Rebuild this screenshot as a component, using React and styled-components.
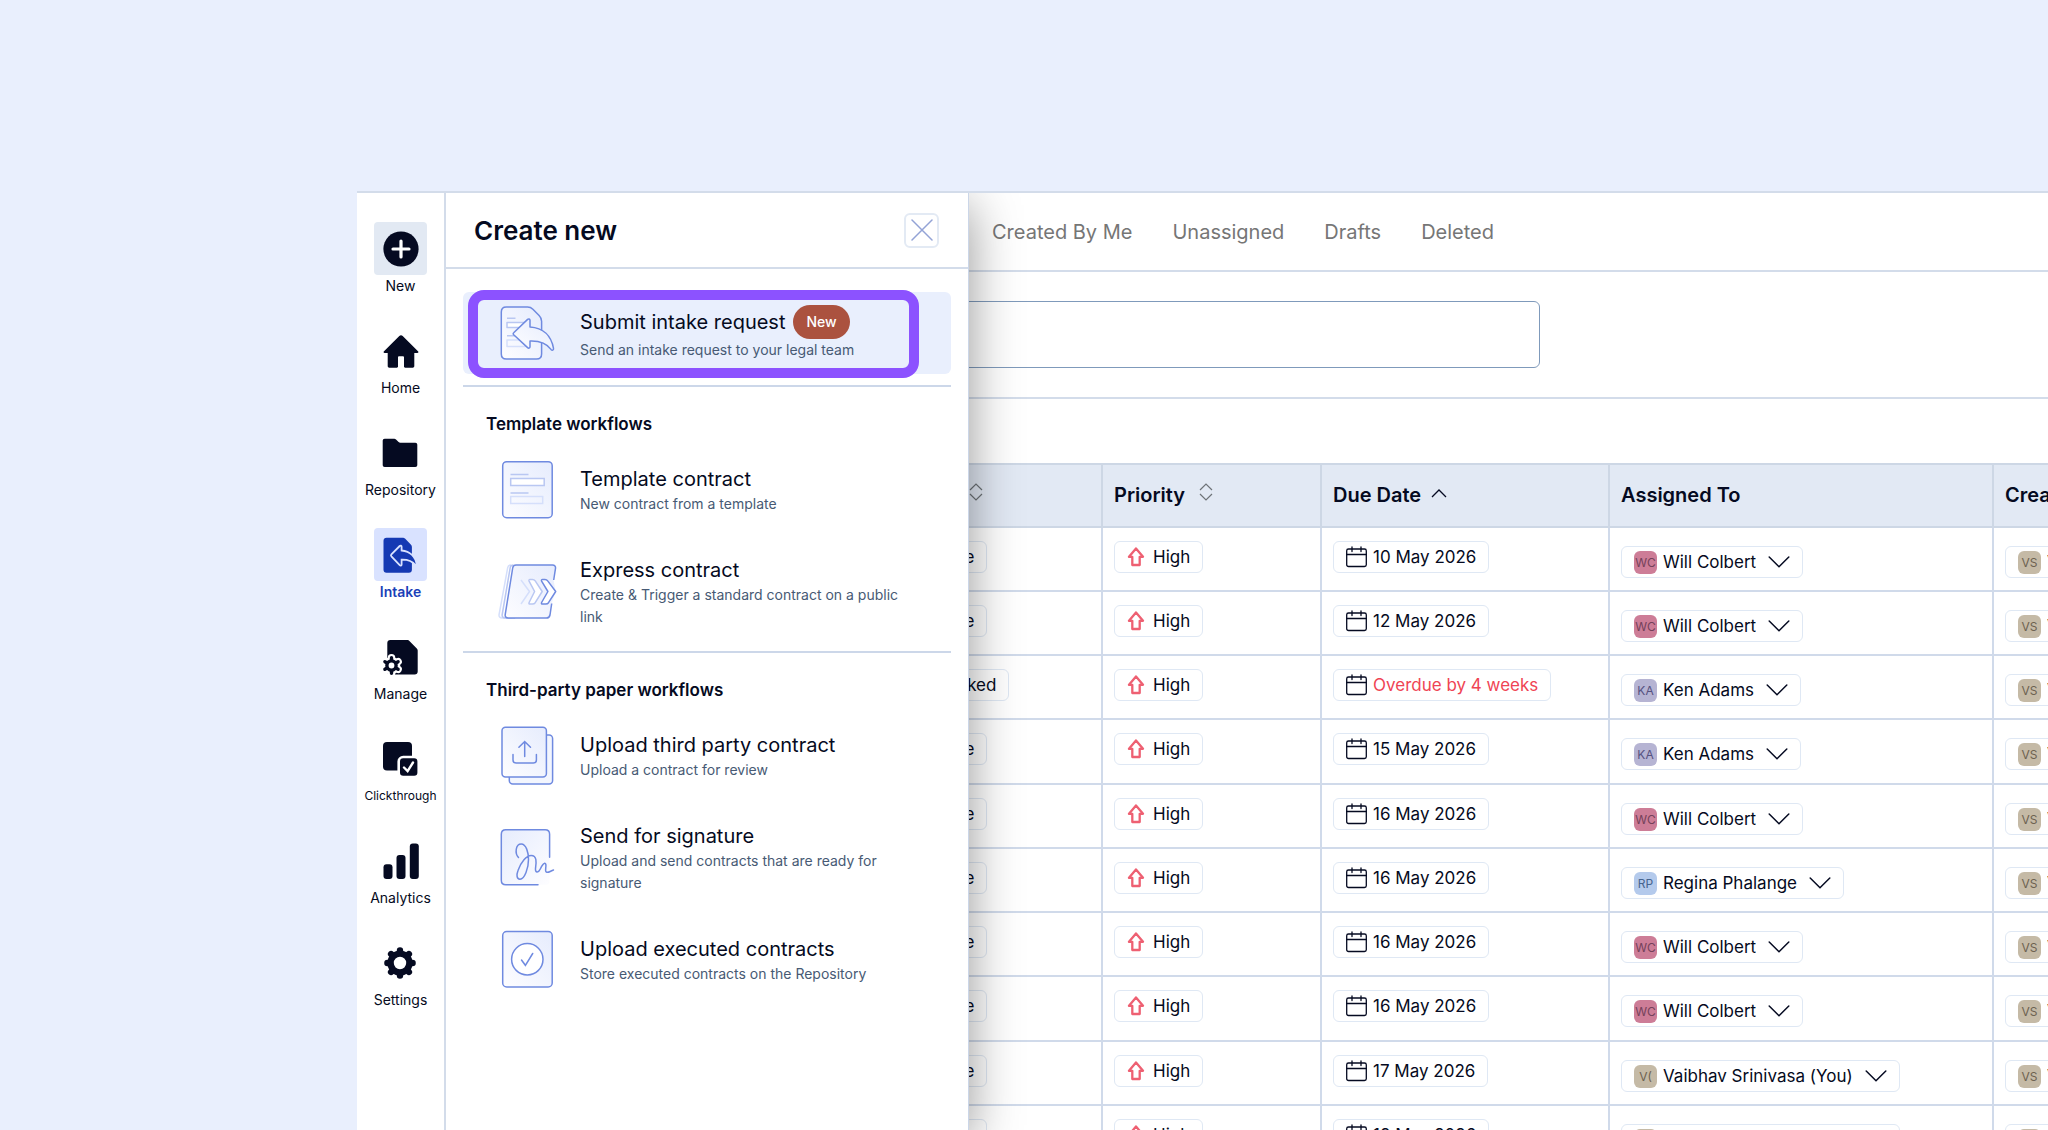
import React from "react";
import styled, { createGlobalStyle } from "styled-components";

const GlobalStyle = createGlobalStyle`
  *, *::before, *::after {
    box-sizing: border-box;
  }

  body {
    margin: 0;
    background: #e9effd;
    color: #050a21;
    font-family: Inter, "Liberation Sans", sans-serif;
    font-size: 18px;
  }

  button, input, select {
    font: inherit;
    color: inherit;
  }
`;

const Page = styled.div`
  display: flex;
  height: 100vh;
  padding: 191px 0 0 357px;
  overflow: hidden;
`;

const Shell = styled.div`
  display: flex;
  flex: 1;
  min-width: 0;
  border-top: 2px solid #d3dcea;
  background: #fff;
`;

/* Left rail */

const Rail = styled.nav`
  display: flex;
  flex: none;
  flex-direction: column;
  align-items: center;
  gap: 27px;
  width: 89px;
  padding-top: 29px;
  border-right: 2px solid #d3dcea;
`;

const RailLink = styled.a`
  display: flex;
  flex-direction: column;
  align-items: center;
  color: ${(props) => (props.$active ? "#1a3fb8" : "#050a21")};
  font-size: ${(props) => (props.$small ? "12px" : "14px")};
  font-weight: ${(props) => (props.$active ? 600 : 400)};
  line-height: 22px;
  text-decoration: none;
`;

const RailTile = styled.span`
  display: flex;
  align-items: center;
  justify-content: center;
  width: 53px;
  height: 53px;
  border-radius: 4px;
  background: ${(props) => props.$tile || "transparent"};
`;

/* Drawer */

const Workspace = styled.div`
  position: relative;
  flex: 1;
  min-width: 0;
  overflow: hidden;
`;

const Drawer = styled.aside`
  position: absolute;
  top: 0;
  bottom: 0;
  left: 0;
  z-index: 1;
  width: 523px;
  border-right: 1px solid #cbd6e8;
  background: #fff;
  box-shadow: 0 12px 48px rgba(0, 0, 0, 0.42);
`;

const DrawerHeader = styled.header`
  display: flex;
  align-items: center;
  justify-content: space-between;
  height: 76px;
  padding: 0 29px 0 28px;
  border-bottom: 2px solid #d3dcea;
`;

const DrawerTitle = styled.h1`
  margin: 0;
  font-size: 26px;
  font-weight: 600;
`;

const CloseButton = styled.button`
  display: flex;
  align-items: center;
  justify-content: center;
  width: 35px;
  height: 35px;
  padding: 0;
  border: 2px solid #e3eaf4;
  border-radius: 6px;
  background: #fff;
`;

const DrawerBody = styled.div`
  padding: 23px 17px 0;
`;

const Workflow = styled.button`
  position: relative;
  display: flex;
  align-items: center;
  gap: 22px;
  width: 100%;
  padding: ${(props) => (props.$highlighted ? "13px 35px" : "21px 35px 20px")};
  border: 0;
  border-radius: 6px;
  background: ${(props) => (props.$highlighted ? "#e9effd" : "transparent")};
  text-align: left;

  svg {
    flex: none;
    margin: -10px 0;
  }
`;

const Spotlight = styled.span`
  position: absolute;
  top: -2px;
  bottom: -4px;
  left: 5px;
  right: 32px;
  border: 10px solid #8c52ff;
  border-radius: 16px;
`;

const WorkflowText = styled.span`
  display: flex;
  flex-direction: column;
`;

const WorkflowTitle = styled.span`
  display: flex;
  align-items: center;
  gap: 8px;
  font-size: 20px;
  line-height: 28px;
`;

const WorkflowNote = styled.span`
  color: #475a74;
  font-size: 14px;
  line-height: 22px;
`;

const Badge = styled.span`
  padding: 0 13px;
  border-radius: 17px;
  background: #ab523f;
  color: #fff;
  font-size: 14px;
  font-weight: 500;
  line-height: 34px;
`;

const Section = styled.section`
  margin-top: ${(props) => props.$gap};
  padding-top: 25px;
  border-top: 2px solid #ccd7e9;
`;

const SectionTitle = styled.h2`
  margin: 0 0 8px;
  padding-left: 23px;
  font-size: 17px;
  font-weight: 600;
  line-height: 24px;
`;

/* Request list */

const Tabs = styled.nav`
  display: flex;
  align-items: center;
  gap: 40px;
  height: 79px;
  padding-left: 546px;
  border-bottom: 2px solid #d3dcea;
`;

const Tab = styled.a`
  color: #767676;
  font-size: 20px;
  text-decoration: none;
  white-space: nowrap;
`;

const SearchBar = styled.div`
  display: flex;
  padding: 29px 32px;
  border-bottom: 2px solid #d3dcea;
`;

const SearchInput = styled.input`
  flex: 0 1 1062px;
  height: 67px;
  border: 1px solid #7f9abb;
  border-radius: 6px;
  background: #fff;
`;

const TableArea = styled.div`
  padding: 64px 0 0 462px;
`;

const Table = styled.table`
  width: 1408px;
  table-layout: fixed;
  border-collapse: separate;
  border-spacing: 0;
`;

const HeadCell = styled.th`
  width: ${(props) => props.$width};
  height: 65px;
  padding: 0 11px 2px;
  border: solid #cdd7e5;
  border-width: 2px 2px 2px 0;
  background: #e2e9f4;
  font-size: 20px;
  font-weight: 600;
  text-align: left;
`;

const SortButton = styled.button`
  display: flex;
  align-items: center;
  gap: ${(props) => props.$gap || "14px"};
  padding: 0;
  border: 0;
  background: none;
  font-weight: 600;
`;

const Row = styled.tr`
  height: 64px;

  &:nth-child(4n) {
    height: 65px;
  }
`;

const Cell = styled.td`
  padding: ${(props) => (props.$person ? "18px" : "13px")} 11px 0;
  border: solid #d0daea;
  border-width: 0 2px 2px 0;
  vertical-align: top;
`;

const Chip = styled.button`
  display: flex;
  align-items: center;
  gap: ${(props) => props.$gap || "6px"};
  width: fit-content;
  height: 32px;
  padding: 0 12px;
  border: 1px solid #dfe8f4;
  border-radius: 6px;
  background: #fff;
  color: ${(props) => (props.$late ? "#ef4454" : "inherit")};
  font-size: 17px;
  white-space: nowrap;
`;

const Avatar = styled.span`
  flex: none;
  width: 23px;
  border-radius: 6px;
  background: ${(props) => props.$back};
  color: ${(props) => props.$ink};
  font-size: 12px;
  line-height: 23px;
  text-align: center;
`;

const PersonSelect = styled.select`
  appearance: none;
  field-sizing: content;
  margin-right: 6px;
  padding: 0;
  border: 0;
  background: none;
`;

const ink = "#050a21";
const line = "#6f8ae0";
const pale = "#b9c7f2";
const faint = "#d5dffb";

const NewIcon = () => (
  <svg width="36" height="36" viewBox="0 0 36 36">
    <circle cx="18" cy="18" r="17.6" fill={ink} />
    <path d="M18 10v16M10 18h16" stroke="#fff" strokeWidth="3.2" strokeLinecap="round" />
  </svg>
);

const HomeIcon = () => (
  <svg width="36" height="36" viewBox="0 0 36 36" fill={ink}>
    <path d="M18 2.2c.7 0 1.1.2 1.7.8L35 18.2c.8.8.4 1.7-.7 1.7h-3v13.2c0 .9-.7 1.6-1.6 1.6h-7.5c-.7 0-1.2-.5-1.2-1.2v-9c0-.7-.5-1.2-1.2-1.2h-3.6c-.7 0-1.2.5-1.2 1.2v9c0 .7-.5 1.2-1.2 1.2H6.3c-.9 0-1.6-.7-1.6-1.6V19.9h-3c-1.1 0-1.5-.9-.7-1.7L16.3 3c.6-.6 1-.8 1.7-.8z" />
  </svg>
);

const FolderIcon = () => (
  <svg width="36" height="36" viewBox="0 0 36 36" fill={ink}>
    <path d="M2.7 3.7h9.6c.7 0 1.2.2 1.7.7l2.6 2.6c.5.5 1 .7 1.7.7h15c1.2 0 2 .8 2 2v20.3c0 1.2-.8 2-2 2H2.7c-1.2 0-2-.8-2-2V5.700c0-1.200.8-2 2-2z" />
  </svg>
);

const IntakeIcon = () => (
  <svg width="36" height="36" viewBox="0 0 36 36" fill="#1539b3">
    <path d="M3.500.7h16.200c1 0 1.600.2 2.300.9l6 6.200c.6.7.9 1.300.9 2.200v22.800c0 1.800-1.200 3-3 3H3.500c-1.800 0-3-1.200-3-3V3.700c0-1.800 1.200-3 3-3z" />
    <path
      d="M8.4 17.3l8.3-8.300c.8-.8 1.900-.4 1.900.7v3.800c8.500.9 14 6.400 15.200 14.300.1.900-.6 1.200-1.200.5-3.500-4.300-7.700-5.800-14-5.600v4.800c0 1.100-1.100 1.500-1.900.7l-8.300-8.900c-.6-.7-.6-1.400 0-2z"
      stroke="#d9e2ff"
      strokeWidth="1.8"
    />
  </svg>
);

const ManageIcon = () => (
  <svg width="36" height="36" viewBox="0 0 36 36" overflow="visible">
    <path
      d="M8.300 1h17c.9 0 1.500.2 2.100.9l7.400 7.700c.6.6.9 1.200.9 2v21c0 1.800-1.200 3-3 3H8.300c-1.800 0-3-1.200-3-3V4c0-1.800 1.200-3 3-3z"
      fill={ink}
    />
    <g fill="#fff" stroke="#fff" strokeWidth="7.5" strokeLinecap="round">
      <circle cx="9.5" cy="26.5" r="5" />
      <path d="M9.500 18.800v15.400M2.900 22.700l13.200 7.600M16.100 22.700L2.900 30.300" />
    </g>
    <g stroke={ink} strokeLinecap="round">
      <path d="M9.500 18.800v15.400M2.900 22.700l13.200 7.600M16.100 22.700L2.900 30.300" strokeWidth="3.4" />
      <circle cx="9.5" cy="26.5" r="4.6" strokeWidth="3.4" fill="#fff" />
    </g>
  </svg>
);

const ClickthroughIcon = () => (
  <svg width="36" height="36" viewBox="0 0 36 36">
    <rect x="1" y="1" width="29" height="28.5" rx="4" fill={ink} />
    <rect x="16.7" y="16" width="20" height="20" rx="4.5" fill={ink} stroke="#fff" strokeWidth="2.6" />
    <path d="M22 26.500l3.600 3.600L31 21.500" fill="none" stroke="#fff" strokeWidth="2.4" strokeLinecap="round" />
  </svg>
);

const AnalyticsIcon = () => (
  <svg width="36" height="36" viewBox="0 0 36 36" fill={ink}>
    <rect x=".5" y="21.3" width="9" height="14.7" rx="3" />
    <rect x="13.5" y="12" width="9" height="24" rx="3" />
    <rect x="26.8" y=".6" width="9" height="35.4" rx="3" />
  </svg>
);

const SettingsIcon = () => (
  <svg width="36" height="36" viewBox="0 0 36 36">
    <g stroke={ink} strokeWidth="6.4" strokeLinecap="round">
      <path d="M18 5.400v25.200M5.400 18h25.200M9.100 9.100l17.800 17.800M26.900 9.100L9.100 26.900" />
    </g>
    <circle cx="18" cy="18" r="9.4" fill="#fff" stroke={ink} strokeWidth="6.4" />
  </svg>
);

const CloseIcon = () => (
  <svg width="22" height="22" viewBox="0 0 22 22" fill="none" stroke="#93a3d6" strokeWidth="1.5">
    <path d="M1 1l20 20M21 1L1 21" strokeLinecap="round" />
  </svg>
);

const HiddenDefs = styled.svg`
  position: absolute;
`;

const Gradients = () => (
  <HiddenDefs width="0" height="0" aria-hidden="true">
    <defs>
      <linearGradient id="sheet" x1="0" y1="1" x2="1" y2="0">
        <stop offset="0" stopColor="#fdfdff" />
        <stop offset="1" stopColor="#e6ecfd" />
      </linearGradient>
      <linearGradient id="sheetDown" x1="0" y1="0" x2="1" y2="1">
        <stop offset="0" stopColor="#e6ecfd" />
        <stop offset="1" stopColor="#fdfdff" />
      </linearGradient>
    </defs>
  </HiddenDefs>
);

const SubmitArt = () => (
  <svg width="60" height="60" viewBox="0 0 60 60" fill="none" stroke={line} strokeWidth="1.5" strokeLinejoin="round">
    <path
      d="M8.300 4h21.200c2.300 0 3.800.6 5.400 2.200l6.200 6.300c1.700 1.700 2.500 3.500 2.500 5.800V51c0 3-2 5-5 5H8.300c-3 0-5-2-5-5V9c0-3 2-5 5-5z"
      fill="url(#sheet)"
    />
    <path d="M9 15.300h8.500M9 32.700h8" stroke={pale} />
    <rect x="9" y="19.5" width="22" height="5" stroke={pale} fill="#fff" />
    <rect x="9" y="37" width="20" height="6.5" stroke={faint} />
    <path
      d="M15.700 29.700L29.600 16.400c1-.9 2.400-.5 2.400.9V24c13.300.8 21.300 9 23.500 21.400.3 1.800-1.300 2.400-2.500 1-4.700-6.500-10.700-8.800-21-8.400v5.700c0 1.400-1.400 1.900-2.400.9L15.700 31.700c-.7-.7-.7-1.400 0-2z"
      fill="url(#sheet)"
    />
  </svg>
);

const TemplateArt = () => (
  <svg width="60" height="60" viewBox="0 0 60 60" fill="none" stroke={line} strokeWidth="1.5">
    <rect x="4.7" y="1.7" width="49.5" height="56" rx="4" fill="url(#sheet)" />
    <path d="M12.500 14.500h18M12.500 33h18" stroke={pale} />
    <rect x="12.7" y="18.5" width="33.5" height="7" stroke={pale} fill="#fff" />
    <rect x="12.7" y="36.5" width="32" height="7" stroke={faint} />
  </svg>
);

const ExpressArt = () => (
  <svg width="60" height="60" viewBox="0 0 60 60" fill="none" stroke={line} strokeWidth="1.5" strokeLinejoin="round">
    <path d="M13 3c-1.900 0-3 1-3.300 2.700L1.100 52.500c-.4 2.200.8 3.500 3 3.500h10" stroke={faint} />
    <path d="M15.500 3c-1.900 0-3 1-3.300 2.700L4.200 52.500c-.4 2.200.8 3.500 3 3.500h10" stroke={pale} />
    <path
      d="M18 3h36.500c2.200 0 3.300 1.300 3 3.400L55.500 18l2.200 11.500-4 12-1.700 11.500c-.4 2-1.600 3-3.600 3H10.200c-2.200 0-3.300-1.300-3-3.400L14.700 6c.3-2 1.400-3 3.300-3z"
      fill="url(#sheet)"
      stroke="none"
    />
    <path d="M55.700 18l1.800-11.600c.3-2.100-.8-3.400-3-3.400H18c-1.900 0-3 1-3.300 3L7.200 52.600c-.3 2.100.8 3.400 3 3.400h38.200c2 0 3.200-1 3.600-3l1.700-11.500" />
    <path d="M23 18l8.500 11.500L23 42" stroke={faint} />
    <path
      d="M32 17.500h2.500c1.200 0 2 .4 2.700 1.400l7 10.600-7 11.200c-.7 1-1.500 1.400-2.700 1.400H32c-1 0-1.300-.8-.9-1.600l5.500-11-5.500-10.400c-.4-.8-.1-1.600.9-1.600z"
      stroke={pale}
      fill="#fff"
    />
    <path
      d="M44.500 17.500H47c1.200 0 2 .4 2.700 1.400l8 10.600-7.200 11.200c-.7 1-1.500 1.400-2.700 1.400h-3.300c-1 0-1.300-.8-.9-1.600l6.300-11-6.300-10.400c-.4-.8-.1-1.600.9-1.600z"
      fill="#fff"
    />
  </svg>
);

const UploadArt = () => (
  <svg width="60" height="60" viewBox="0 0 60 60" fill="none" stroke={line} strokeWidth="1.5" strokeLinecap="round">
    <rect x="11.3" y="9" width="43.3" height="49" rx="3.5" fill="#f3f6fe" />
    <rect x="4" y="1.3" width="44.4" height="49.7" rx="3.5" fill="url(#sheet)" />
    <path d="M26.700 15.500v15M20.900 21.300l5.800-5.800 5.800 5.800" />
    <path d="M15 28.500V34c0 2 1 3 3 3h17.400c2 0 3-1 3-3v-5.500" />
  </svg>
);

const SignatureArt = () => (
  <svg width="60" height="60" viewBox="0 0 60 60" fill="none" stroke={line} strokeWidth="1.5" strokeLinecap="round">
    <rect x="3.3" y="1.7" width="48.3" height="55" rx="4" fill="url(#sheetDown)" stroke="none" />
    <path d="M40 56.700H7.800c-3 0-4.500-1.500-4.500-4.500v-46c0-3 1.500-4.500 4.500-4.500h39.300c3 0 4.500 1.500 4.500 4.500v23" />
    <path d="M20.500 29.500c-4-4.500-2.800-13.500 2.700-13.500 5 0 7.300 8.500 7.300 15.500 0 8.500-3.800 19.500-8.500 19.700-3.500.1-3.600-4.500-2-8.700 3-8.500 8.500-15 13.200-15 6.500 0 4.800 8.500 4.300 13-.4 4.500 3 4.500 4.800.5 1.300-3 4.500-8 5.500-4.700.8 3-1.700 7.300 1 8 2 .5 4-1.500 6.700-2.300" />
  </svg>
);

const ExecutedArt = () => (
  <svg width="60" height="60" viewBox="0 0 60 60" fill="none" stroke={line} strokeWidth="1.5" strokeLinecap="round">
    <rect x="4.7" y="1.5" width="49.5" height="55.5" rx="4" fill="url(#sheet)" />
    <circle cx="29.3" cy="29.3" r="15.7" fill="#fff" />
    <path d="M23.500 30l3.900 5.300 7.300-11.800" />
  </svg>
);

const SortIcon = () => (
  <svg width="14" height="24" viewBox="0 0 14 24" fill="none" stroke="#6e7378" strokeWidth="1.2">
    <path d="M1 7l6-6 6 6M1 11l6 6 6-6" />
  </svg>
);

const AscendingIcon = () => (
  <svg width="16" height="18" viewBox="0 0 16 18" fill="none" stroke={ink} strokeWidth="1.3">
    <path d="M1 11l7-7 7 7" />
  </svg>
);

const HighIcon = () => (
  <svg width="18" height="20" viewBox="0 0 18 20" fill="none" stroke="#ee6072" strokeWidth="2.3" strokeLinejoin="round">
    <path d="M9 1.500l-7 8.300h3.300v8.200h7.400V9.800H16z" />
  </svg>
);

const CalendarIcon = () => (
  <svg width="21" height="22" viewBox="0 0 21 22" fill="none" stroke={ink} strokeWidth="1.3" strokeLinecap="round">
    <rect x=".7" y="3" width="19.6" height="17.5" rx="1.8" />
    <path d="M.7 8.500h19.600M6 1v4.500M15 1v4.500" />
  </svg>
);

const ChevronIcon = () => (
  <svg width="22" height="12" viewBox="0 0 22 12" fill="none" stroke={ink} strokeWidth="1.5" strokeLinecap="round">
    <path d="M1.200 1l9.800 9.800L20.800 1" />
  </svg>
);

const railItems = [
  { label: "New", icon: <NewIcon />, tile: "#e2e9f3" },
  { label: "Home", icon: <HomeIcon /> },
  { label: "Repository", icon: <FolderIcon /> },
  { label: "Intake", icon: <IntakeIcon />, tile: "#d9e2ff", active: true },
  { label: "Manage", icon: <ManageIcon /> },
  { label: "Clickthrough", icon: <ClickthroughIcon />, small: true },
  { label: "Analytics", icon: <AnalyticsIcon /> },
  { label: "Settings", icon: <SettingsIcon /> },
];

const sections = [
  {
    title: "Template workflows",
    gap: "11px",
    items: [
      { title: "Template contract", note: "New contract from a template", art: <TemplateArt /> },
      {
        title: "Express contract",
        note: "Create & Trigger a standard contract on a public link",
        art: <ExpressArt />,
      },
    ],
  },
  {
    title: "Third-party paper workflows",
    gap: "3px",
    items: [
      { title: "Upload third party contract", note: "Upload a contract for review", art: <UploadArt /> },
      {
        title: "Send for signature",
        note: "Upload and send contracts that are ready for signature",
        art: <SignatureArt />,
      },
      {
        title: "Upload executed contracts",
        note: "Store executed contracts on the Repository",
        art: <ExecutedArt />,
      },
    ],
  },
];

const people = {
  "Will Colbert": { initials: "WC", back: "#cd7d97", ink: "#74415a" },
  "Ken Adams": { initials: "KA", back: "#b6b4d3", ink: "#55517f" },
  "Regina Phalange": { initials: "RP", back: "#b4caec", ink: "#46648f" },
  "Vaibhav Srinivasa (You)": { initials: "V(", back: "#c5baa6", ink: "#6d6251" },
  "Vaibhav Srinivasa": { initials: "VS", back: "#c5baa6", ink: "#6d6251" },
};

const requests = [
  { status: "Done", due: "10 May 2026", assignee: "Will Colbert" },
  { status: "Done", due: "12 May 2026", assignee: "Will Colbert" },
  { status: "Blocked", due: "Overdue by 4 weeks", late: true, assignee: "Ken Adams" },
  { status: "Done", due: "15 May 2026", assignee: "Ken Adams" },
  { status: "Done", due: "16 May 2026", assignee: "Will Colbert" },
  { status: "Done", due: "16 May 2026", assignee: "Regina Phalange" },
  { status: "Done", due: "16 May 2026", assignee: "Will Colbert" },
  { status: "Done", due: "16 May 2026", assignee: "Will Colbert" },
  { status: "Done", due: "17 May 2026", assignee: "Vaibhav Srinivasa (You)" },
  { status: "Done", due: "18 May 2026", assignee: "Vaibhav Srinivasa (You)" },
];

const Person = ({ name, label }) => (
  <Chip as="label">
    <Avatar $back={people[name].back} $ink={people[name].ink}>
      {people[name].initials}
    </Avatar>
    <PersonSelect defaultValue={name} aria-label={label}>
      {Object.keys(people).map((person) => (
        <option key={person}>{person}</option>
      ))}
    </PersonSelect>
    <ChevronIcon />
  </Chip>
);

const CreateDrawer = () => (
  <Drawer>
    <Gradients />
    <DrawerHeader>
      <DrawerTitle>Create new</DrawerTitle>
      <CloseButton aria-label="Close">
        <CloseIcon />
      </CloseButton>
    </DrawerHeader>
    <DrawerBody>
      <Workflow $highlighted>
        <SubmitArt />
        <WorkflowText>
          <WorkflowTitle>
            Submit intake request <Badge>New</Badge>
          </WorkflowTitle>
          <WorkflowNote>Send an intake request to your legal team</WorkflowNote>
        </WorkflowText>
        <Spotlight />
      </Workflow>
      {sections.map((section) => (
        <Section key={section.title} $gap={section.gap}>
          <SectionTitle>{section.title}</SectionTitle>
          {section.items.map((item) => (
            <Workflow key={item.title}>
              {item.art}
              <WorkflowText>
                <WorkflowTitle>{item.title}</WorkflowTitle>
                <WorkflowNote>{item.note}</WorkflowNote>
              </WorkflowText>
            </Workflow>
          ))}
        </Section>
      ))}
    </DrawerBody>
  </Drawer>
);

const RequestTable = () => (
  <Table>
    <thead>
      <tr>
        <HeadCell $width="195px">
          <SortButton $gap="6px">
            Step <SortIcon />
          </SortButton>
        </HeadCell>
        <HeadCell $width="219px">
          <SortButton>
            Priority <SortIcon />
          </SortButton>
        </HeadCell>
        <HeadCell $width="288px">
          <SortButton $gap="10px">
            Due Date <AscendingIcon />
          </SortButton>
        </HeadCell>
        <HeadCell $width="384px">Assigned To</HeadCell>
        <HeadCell $width="322px">Created By</HeadCell>
      </tr>
    </thead>
    <tbody>
      {requests.map((request, index) => (
        <Row key={index}>
          <Cell>
            <Chip>{request.status}</Chip>
          </Cell>
          <Cell>
            <Chip $gap="8px">
              <HighIcon /> High
            </Chip>
          </Cell>
          <Cell>
            <Chip $late={request.late}>
              <CalendarIcon /> {request.due}
            </Chip>
          </Cell>
          <Cell $person>
            <Person name={request.assignee} label="Assigned to" />
          </Cell>
          <Cell $person>
            <Person name="Vaibhav Srinivasa" label="Created by" />
          </Cell>
        </Row>
      ))}
    </tbody>
  </Table>
);

const App = () => (
  <>
    <GlobalStyle />
    <Page>
      <Shell>
        <Rail>
          {railItems.map((item) => (
            <RailLink key={item.label} href="#" $active={item.active} $small={item.small}>
              <RailTile $tile={item.tile}>{item.icon}</RailTile>
              {item.label}
            </RailLink>
          ))}
        </Rail>
        <Workspace>
          <CreateDrawer />
          <Tabs>
            <Tab href="#">Created By Me</Tab>
            <Tab href="#">Unassigned</Tab>
            <Tab href="#">Drafts</Tab>
            <Tab href="#">Deleted</Tab>
          </Tabs>
          <SearchBar>
            <SearchInput type="search" aria-label="Search requests" />
          </SearchBar>
          <TableArea>
            <RequestTable />
          </TableArea>
        </Workspace>
      </Shell>
    </Page>
  </>
);

export default App;
